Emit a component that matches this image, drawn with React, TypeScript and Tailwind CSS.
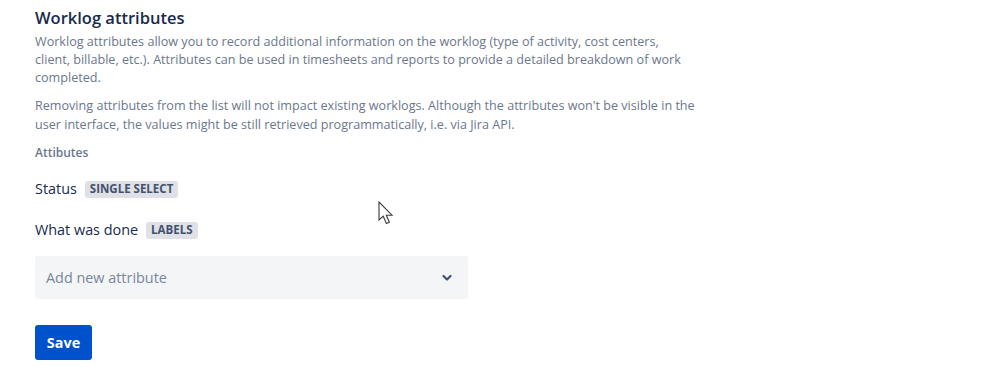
import React from "react";

export default function App() {
  return (
    <div
      className="relative w-[999px] h-[371px] bg-white overflow-hidden"
      style={{ fontFamily: '"Open Sans", "Noto Sans", sans-serif' }}
    >
      <div className="pl-[35px] pt-[6px] flex flex-col">
        <h1 className="text-[16.5px] leading-[24px] font-semibold text-[#172b4d]">
          Worklog attributes
        </h1>
        <p className="mt-[3px] text-[12.6px] leading-[18px] text-[#6b778c] whitespace-nowrap">
          <span className="block">
            Worklog attributes allow you to record additional information on the worklog (type of activity, cost centers,
          </span>
          <span className="block">
            client, billable, etc.). Attributes can be used in timesheets and reports to provide a detailed breakdown of work
          </span>
          <span className="block">completed.</span>
        </p>
        <p className="mt-[10px] text-[12.6px] leading-[18.5px] text-[#6b778c] whitespace-nowrap">
          <span className="block">
            Removing attributes from the list will not impact existing worklogs. Although the attributes won't be visible in the
          </span>
          <span className="block">
            user interface, the values might be still retrieved programmatically, i.e. via Jira API.
          </span>
        </p>
        <div className="mt-[10px] text-[12px] leading-[18px] font-semibold text-[#6b778c]">
          Attibutes
        </div>
        <div className="mt-[15px] flex items-center gap-[8px] h-[24px]">
          <span className="text-[14.4px] text-[#172b4d]">Status</span>
          <span className="bg-[#dfe1e6] text-[#42526e] text-[11.5px] font-bold uppercase rounded-[3px] px-[5px] h-[17px] flex items-center">
            Single select
          </span>
        </div>
        <div className="mt-[17px] flex items-center gap-[8px] h-[24px]">
          <span className="text-[14.4px] text-[#172b4d]">What was done</span>
          <span className="bg-[#dfe1e6] text-[#42526e] text-[11.5px] font-bold uppercase rounded-[3px] px-[5px] h-[17px] flex items-center">
            Labels
          </span>
        </div>
        <div className="mt-[14px] w-[433px] h-[43px] bg-[#f4f5f7] rounded-[3px] flex items-center justify-between pl-[11px] pr-[16px]">
          <span className="text-[14.4px] text-[#7a869a]">Add new attribute</span>
          <svg width="10" height="8" viewBox="0 0 10 8">
            <path d="M1.5 2 L5 5.5 L8.5 2" fill="none" stroke="#42526e" strokeWidth="2.2" strokeLinecap="round" strokeLinejoin="round" />
          </svg>
        </div>
        <div className="mt-[26px]">
          <button className="w-[57px] h-[35px] bg-[#0052cc] text-white text-[14.4px] font-bold rounded-[3px]">
            Save
          </button>
        </div>
      </div>
      <svg
        className="absolute left-[378px] top-[201px]"
        width="16"
        height="26"
        viewBox="0 0 16 26"
      >
        <path
          d="M1 1 L1 19 L5.2 15.2 L8.4 22.6 L11.4 21.3 L8.3 14.2 L14 14.2 Z"
          fill="white"
          stroke="#3a3a3a"
          strokeWidth="1.1"
          strokeLinejoin="miter"
        />
      </svg>
    </div>
  );
}
